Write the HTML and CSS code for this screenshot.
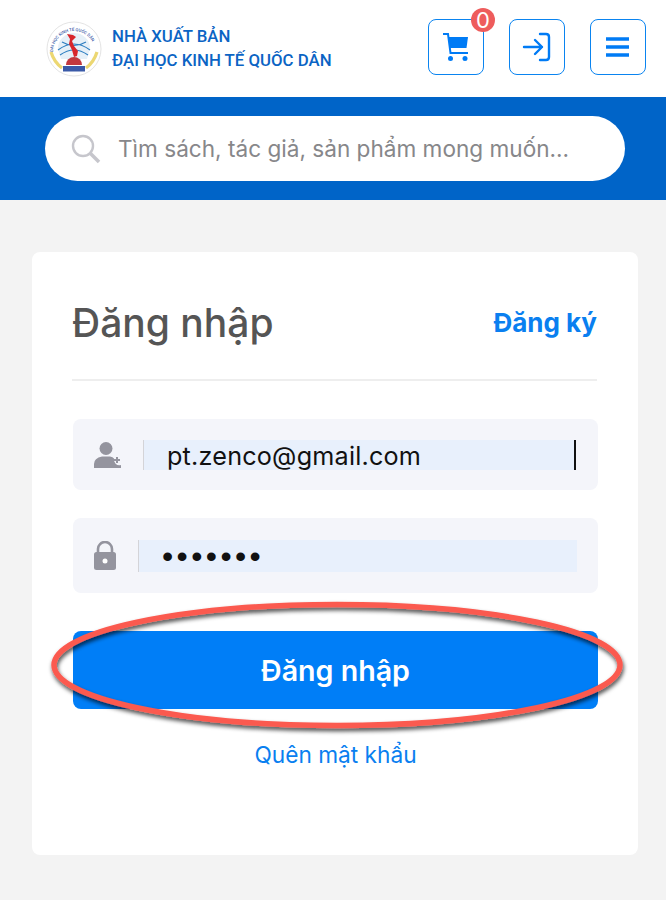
FILE: index.html
```html
<!DOCTYPE html>
<html lang="en">
<head>
    <meta charset="UTF-8">
    <meta name="viewport" content="width=device-width, initial-scale=1.0">
    <title>Đăng nhập</title>
    <link rel="stylesheet" href="styles.css">
</head>
<body>
    <header class="top-bar">
        <div class="brand">
            <svg class="brand-logo" width="56" height="56" viewBox="0 0 56 56">
                <defs>
                    <path id="logoArc" d="M7 31 A21 21 0 1 1 49 31"/>
                </defs>
                <circle cx="28" cy="28" r="27" fill="#fff" stroke="#e4e4e4"/>
                <path d="M12 27 A16 15 0 0 1 44 27 L41 38 H15 Z" fill="#e6f0f8"/>
                <path d="M12 29 Q28 17 44 29 M14 34 Q28 24 42 34 M16 21 Q28 28 40 21" fill="none" stroke="#2f7fc1" stroke-width="1.1"/>
                <path d="M21 13 L27 14 L30 16 L26 20 L28 25 L32 30 L31 35 L28 36 L26 29 L23 23 L24 18 Z" fill="#d8262c"/>
                <path d="M20 44 A8 8 0 0 1 36 44 Z" fill="#c2383e"/>
                <path d="M5 31 Q8 41 16 47 M51 31 Q48 41 40 47" fill="none" stroke="#ecd772" stroke-width="3.2"/>
                <rect x="17" y="45" width="22" height="5.5" fill="#3a5aa8"/>
                <text class="logo-ring-text"><textPath href="#logoArc">ĐẠI HỌC KINH TẾ QUỐC DÂN</textPath></text>
            </svg>
            <div class="brand-name">
                <div>NHÀ XUẤT BẢN</div>
                <div>ĐẠI HỌC KINH TẾ QUỐC DÂN</div>
            </div>
        </div>
        <div class="top-actions">
            <div class="icon-btn">
                <svg width="26" height="30" viewBox="0 0 26 30">
                    <path d="M5 5 H25 L23.5 16 H7 Z" fill="#007bf5"/>
                    <path d="M0 2 H5 L7.5 21 H25" fill="none" stroke="#007bf5" stroke-width="2"/>
                    <circle cx="7.5" cy="26.5" r="2.5" fill="#007bf5"/>
                    <circle cx="22" cy="26.5" r="2.5" fill="#007bf5"/>
                </svg>
                <span class="cart-badge">0</span>
            </div>
            <div class="icon-btn">
                <svg width="30" height="30" viewBox="0 0 30 30">
                    <path d="M18 2 H24 Q27 2 27 5 V25 Q27 28 24 28 H18" fill="none" stroke="#007bf5" stroke-width="2.4" stroke-linecap="round"/>
                    <path d="M2 15 H20 M13 8 L20 15 L13 22" fill="none" stroke="#007bf5" stroke-width="2.4" stroke-linecap="round" stroke-linejoin="round"/>
                </svg>
            </div>
            <div class="icon-btn">
                <svg width="24" height="22" viewBox="0 0 24 22">
                    <path d="M0 3 H23 M0 11 H23 M0 19 H23" stroke="#007bf5" stroke-width="3.6"/>
                </svg>
            </div>
        </div>
    </header>

    <div class="search-band">
        <div class="search-box">
            <svg width="32" height="32" viewBox="0 0 32 32">
                <circle cx="13" cy="13" r="10" fill="none" stroke="#c6c6cc" stroke-width="2.4"/>
                <path d="M20.5 20.5 L29 29" stroke="#c6c6cc" stroke-width="3.6"/>
            </svg>
            <span class="search-text">Tìm sách, tác giả, sản phẩm mong muốn...</span>
        </div>
    </div>

    <main class="page-body">
        <section class="login-card">
            <div class="card-head">
                <h1>Đăng nhập</h1>
                <a class="signup-link">Đăng ký</a>
            </div>

            <div class="field field-email">
                <svg width="28" height="28" viewBox="0 0 28 28">
                    <circle cx="12" cy="7.5" r="6.5" fill="#94949e"/>
                    <path d="M0 27 V23 Q0 17 8 15.5 H16 Q19 16 20 17.5 A5.5 5.5 0 0 0 27 24 V27 Z" fill="#94949e"/>
                    <path d="M23 16 V22 M20 19 H26" stroke="#94949e" stroke-width="2"/>
                </svg>
                <div class="field-value value-email">pt.zenco@gmail.com<span class="caret"></span></div>
            </div>

            <div class="field field-pass">
                <svg width="24" height="30" viewBox="0 0 24 30">
                    <path d="M5 12 V8 A6.5 6.5 0 0 1 19 8 V12" fill="none" stroke="#94949e" stroke-width="2.6"/>
                    <rect x="1" y="11" width="22" height="18" rx="2.5" fill="#94949e"/>
                    <circle cx="12" cy="20" r="2.5" fill="#fff"/>
                </svg>
                <div class="field-value value-pass">•••••••</div>
            </div>

            <button class="submit-btn">Đăng nhập</button>
            <a class="forgot-link">Quên mật khẩu</a>
        </section>
    </main>

    <!-- red marker drawn on top of the screenshot -->
    <svg class="marker" width="666" height="160" viewBox="0 0 666 160">
        <defs>
            <filter id="markerShadow" x="-5%" y="-20%" width="110%" height="140%">
                <feDropShadow dx="1" dy="3" stdDeviation="2" flood-color="#000" flood-opacity="0.7"/>
            </filter>
        </defs>
        <ellipse cx="337" cy="70" rx="283" ry="60.5" fill="none" stroke="#fb5a50" stroke-width="5.5" filter="url(#markerShadow)"/>
    </svg>
</body>
</html>
```

FILE: styles.css
```css
body, html {
    margin: 0;
    padding: 0;
    font-family: 'Inter', 'Liberation Sans', sans-serif;
    background-color: #f3f3f3;
    height: 900px;
    overflow: hidden;
}

body {
    position: relative;
}

/* Header */
.top-bar {
    height: 97px;
    box-sizing: border-box;
    background-color: #fff;
    display: flex;
    align-items: center;
    justify-content: space-between;
    padding: 0 20px 0 46px;
}

.brand {
    display: flex;
    align-items: center;
    gap: 10px;
}

.logo-ring-text {
    font-family: 'Roboto', sans-serif;
    font-size: 4.2px;
    font-weight: 500;
    fill: #3a5aa8;
}

.brand-name {
    font-family: 'Roboto', sans-serif;
    font-weight: 500;
    font-size: 16.8px;
    line-height: 24px;
    color: #0b64c4;
    margin-top: -2px;
}

.top-actions {
    display: flex;
    gap: 25px;
    padding-bottom: 3px;
}

.icon-btn {
    width: 56px;
    height: 56px;
    box-sizing: border-box;
    border: 1.5px solid #0a84f0;
    border-radius: 8px;
    display: flex;
    align-items: center;
    justify-content: center;
    position: relative;
}

.cart-badge {
    position: absolute;
    top: -12px;
    right: -12px;
    width: 24px;
    height: 24px;
    border-radius: 50%;
    background-color: #ee5c5c;
    color: #fff;
    font-size: 22px;
    line-height: 24px;
    text-align: center;
}

/* Search */
.search-band {
    height: 103px;
    box-sizing: border-box;
    background-color: #0064c8;
    padding: 19px 41px 0 45px;
}

.search-box {
    height: 65px;
    box-sizing: border-box;
    background-color: #fff;
    border-radius: 33px;
    display: flex;
    align-items: center;
    gap: 16px;
    padding-left: 25px;
}

.search-text {
    font-size: 22.6px;
    color: #87878a;
    white-space: nowrap;
}

/* Login card */
.page-body {
    padding: 52px 28px 0 32px;
}

.login-card {
    height: 603px;
    box-sizing: border-box;
    background-color: #fff;
    border-radius: 8px;
    padding: 0 40px 0 41px;
    display: flex;
    flex-direction: column;
}

.card-head {
    height: 129px;
    box-sizing: border-box;
    border-bottom: 2px solid #eeeeee;
    display: flex;
    align-items: center;
    justify-content: space-between;
    margin-right: 1px;
    margin-left: -1px;
    padding-top: 14px;
    margin-bottom: 38px;
}

h1 {
    margin: 0;
    font-size: 39px;
    font-weight: 500;
    color: #555555;
}

.signup-link {
    font-size: 26px;
    font-weight: 700;
    color: #0a7ff0;
}

.field {
    background-color: #f4f5fa;
    border-radius: 8px;
    display: flex;
    align-items: center;
    box-sizing: border-box;
    padding-left: 21px;
}

.field-email {
    height: 71px;
    margin-bottom: 28px;
}

.field-pass {
    height: 75px;
    margin-bottom: 38px;
    padding-left: 20px;
}

.field-value {
    background-color: #e8f0fc;
    border-left: 1px solid #d4d4d8;
    color: #111;
    box-sizing: border-box;
    position: relative;
}

.value-email {
    height: 30px;
    width: 433px;
    margin-left: 21px;
    padding-left: 23px;
    font-size: 25.2px;
    line-height: 33px;
    letter-spacing: 0.2px;
}

.caret {
    position: absolute;
    right: 0;
    top: 0;
    width: 2px;
    height: 30px;
    background-color: #111;
}

.value-pass {
    height: 32px;
    width: 439px;
    margin-left: 21px;
    padding-left: 23px;
    font-family: 'Liberation Sans', sans-serif;
    font-size: 32px;
    line-height: 32px;
    letter-spacing: 3.4px;
}

.submit-btn {
    height: 78px;
    border: none;
    border-radius: 8px;
    background-color: #007ef7;
    color: #fff;
    font-family: inherit;
    font-size: 28.6px;
    font-weight: 600;
    padding: 0;
}

.forgot-link {
    margin-top: 32px;
    text-align: center;
    font-size: 22.7px;
    line-height: 28px;
    color: #0a7ff0;
}

/* Marker over the button */
.marker {
    position: absolute;
    left: 0;
    top: 595px;
}
```
